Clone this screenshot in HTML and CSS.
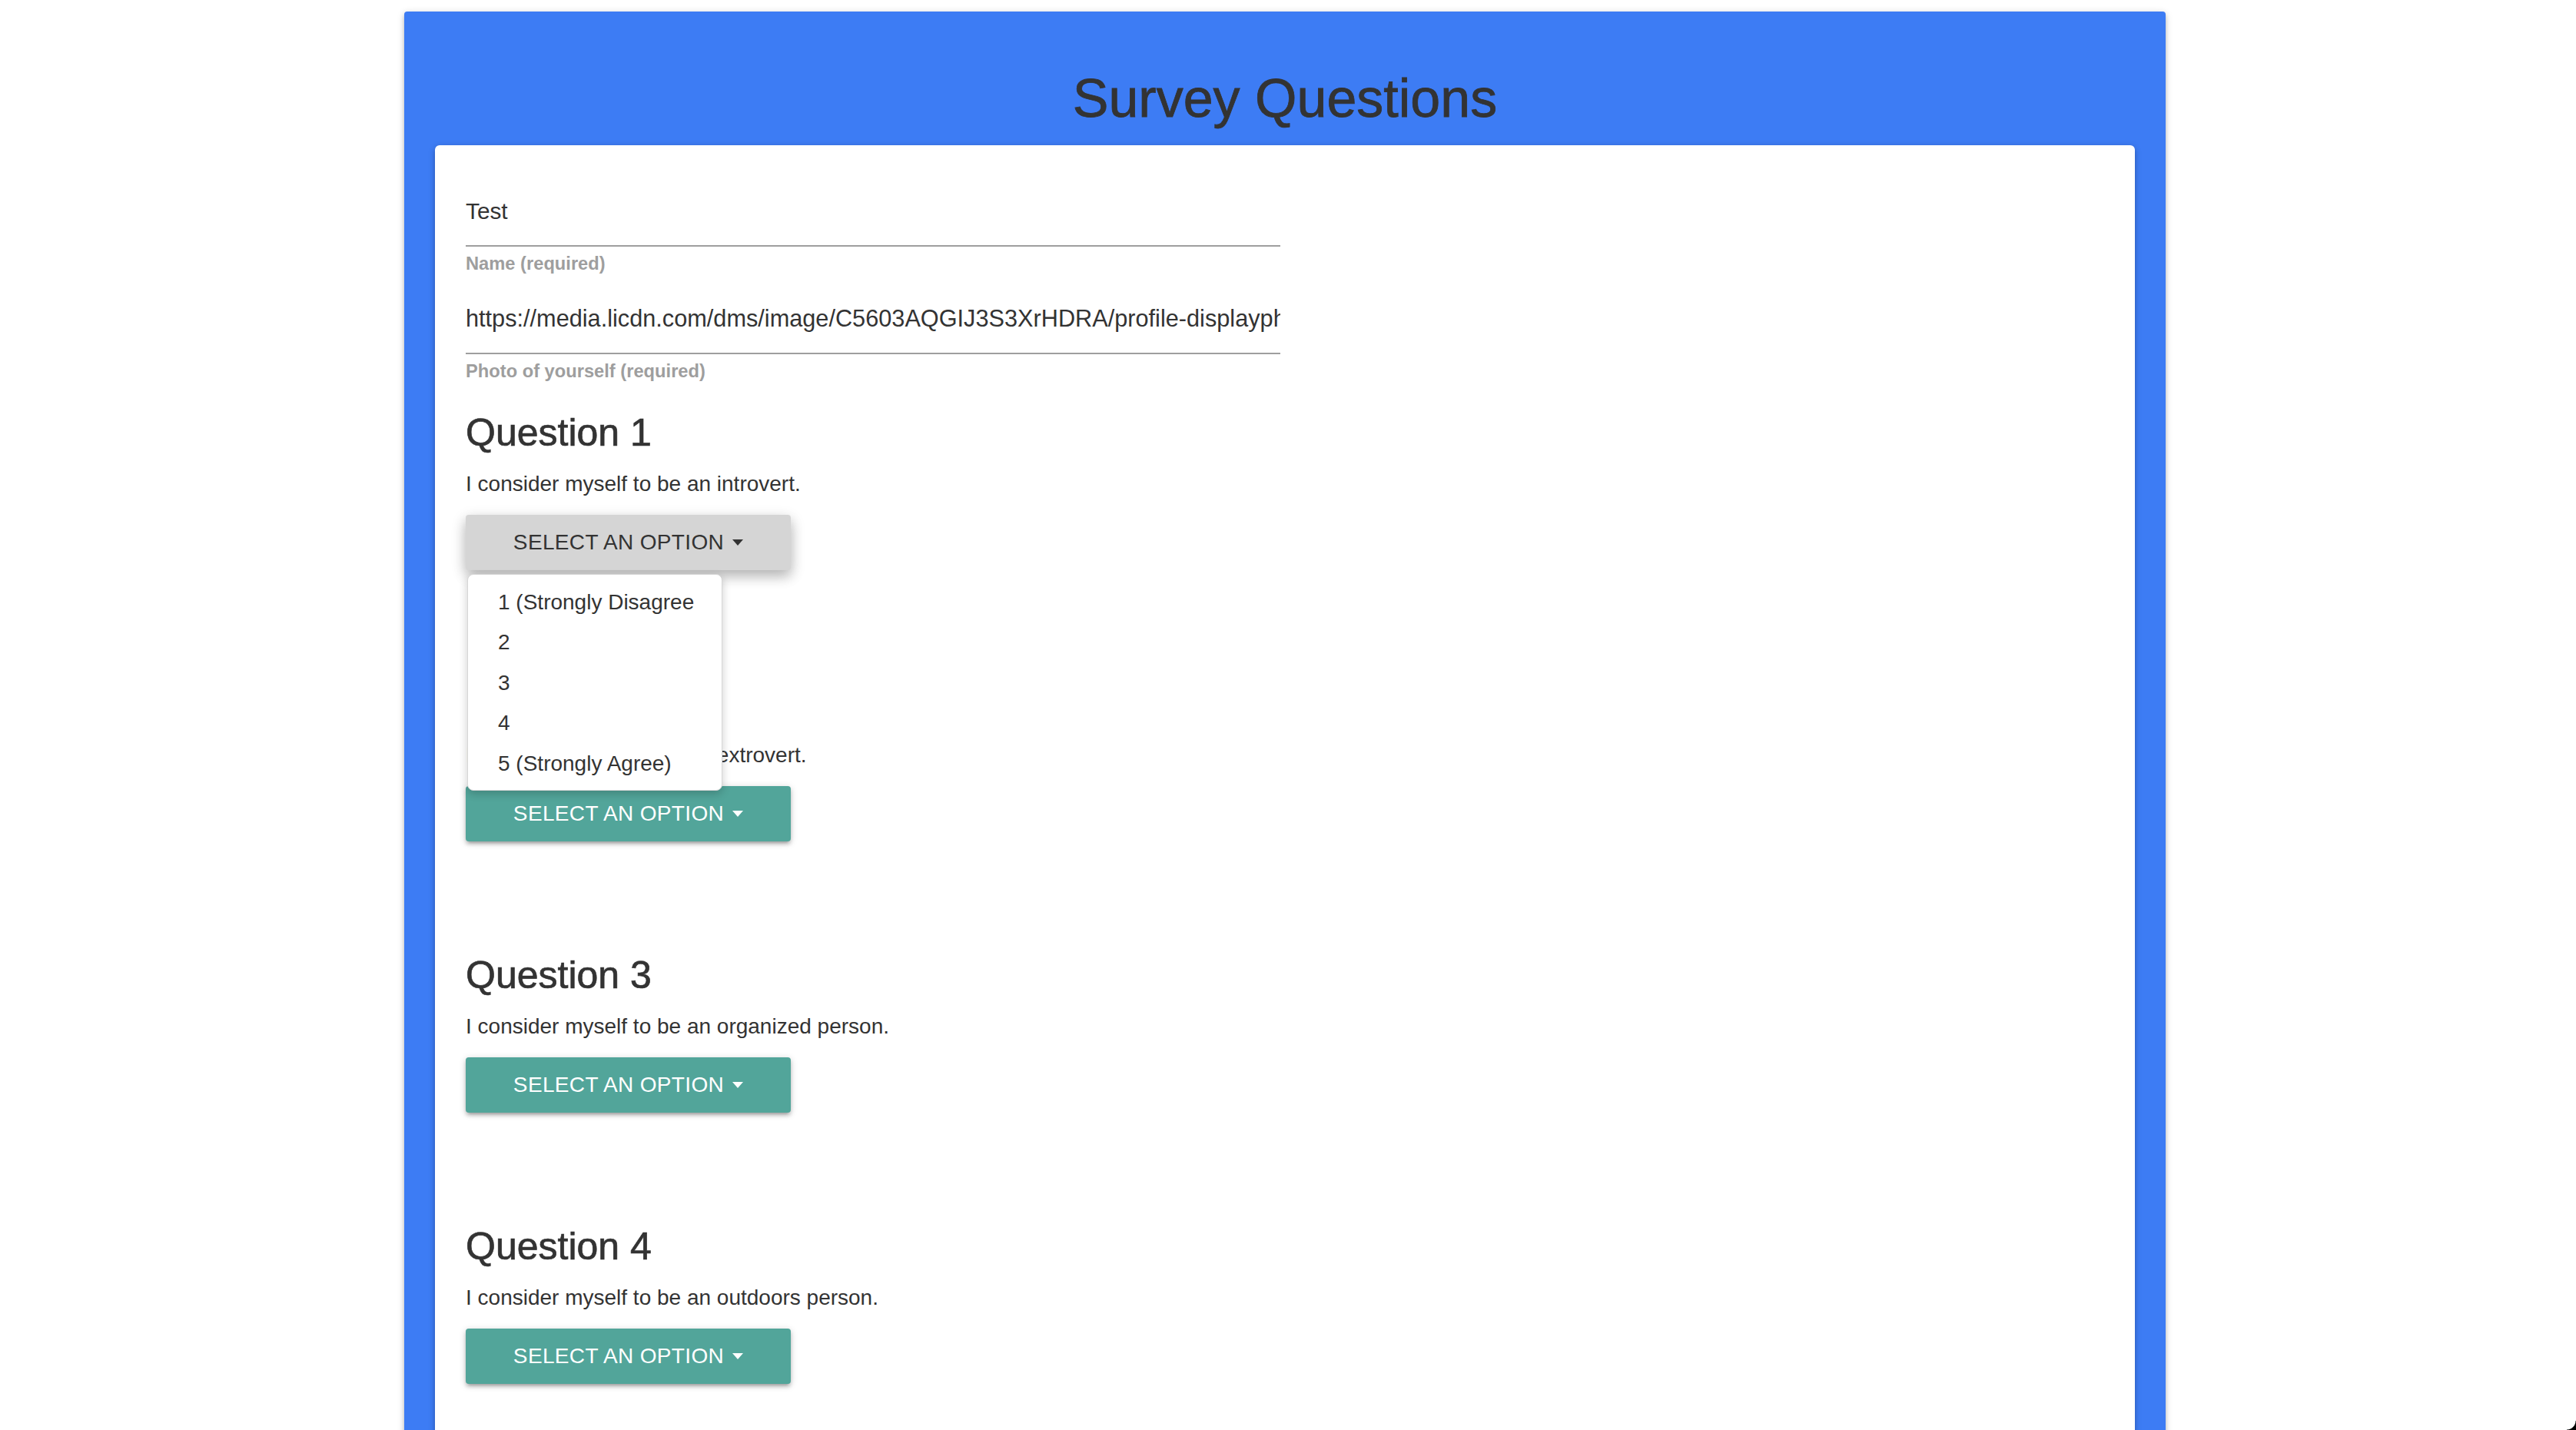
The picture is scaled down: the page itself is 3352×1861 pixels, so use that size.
FILE: index.html
```html
<!DOCTYPE html>
<html lang="en">
<head>
<meta charset="utf-8">
<title>Survey Questions</title>
<link rel="stylesheet" href="styles.css">
</head>
<body>
<div class="page">
  <div class="survey">
    <h1 class="title">Survey Questions</h1>
    <div class="card">
      <div class="field">
        <div class="field-input">Test</div>
        <div class="field-label">Name (required)</div>
      </div>
      <div class="field field-next">
        <div class="field-input field-url">https://media.licdn.com/dms/image/C5603AQGIJ3S3XrHDRA/profile-displayphoto-shrink_200_200/0?e=1530000000</div>
        <div class="field-label">Photo of yourself (required)</div>
      </div>

      <div class="question question-first">
        <h2 class="q-title">Question 1</h2>
        <p class="q-text">I consider myself to be an introvert.</p>
        <div class="select">
          <button class="btn btn-open" type="button">SELECT AN OPTION<span class="caret"></span></button>
          <ul class="menu">
            <li>1 (Strongly Disagree</li>
            <li>2</li>
            <li>3</li>
            <li>4</li>
            <li>5 (Strongly Agree)</li>
          </ul>
        </div>
      </div>

      <div class="question">
        <h2 class="q-title">Question 2</h2>
        <p class="q-text">I consider myself to be an extrovert.</p>
        <div class="select">
          <button class="btn" type="button">SELECT AN OPTION<span class="caret"></span></button>
        </div>
      </div>

      <div class="question">
        <h2 class="q-title">Question 3</h2>
        <p class="q-text">I consider myself to be an organized person.</p>
        <div class="select">
          <button class="btn" type="button">SELECT AN OPTION<span class="caret"></span></button>
        </div>
      </div>

      <div class="question">
        <h2 class="q-title">Question 4</h2>
        <p class="q-text">I consider myself to be an outdoors person.</p>
        <div class="select">
          <button class="btn" type="button">SELECT AN OPTION<span class="caret"></span></button>
        </div>
      </div>
    </div>
  </div>
</div>
<div class="window-corner"></div>
</body>
</html>
```

FILE: styles.css
```css
* {
  box-sizing: border-box;
}

html {
  overflow: hidden;
}

body {
  margin: 0;
  background: #ffffff;
  color: #333333;
  font-family: "Liberation Sans", Arial, Helvetica, sans-serif;
}

.page {
  padding: 15px 0 0 526px;
}

.survey {
  width: 2292px;
  background: #3d7cf4;
  padding: 73px 40px 40px;
  border-radius: 4px 4px 0 0;
  box-shadow: 0 4px 4px 0 rgba(0, 0, 0, 0.14), 0 6px 2px -4px rgba(0, 0, 0, 0.12), 0 2px 10px 0 rgba(0, 0, 0, 0.2);
}

.title {
  margin: 0;
  font-size: 70px;
  line-height: 80px;
  font-weight: 400;
  text-align: center;
  color: #333333;
  -webkit-text-stroke: 0.8px #333333;
}

.card {
  margin-top: 21px;
  background: #ffffff;
  border-radius: 6px;
  padding: 66px 40px 240px;
  box-shadow: 0 4px 4px 0 rgba(0, 0, 0, 0.14), 0 6px 2px -4px rgba(0, 0, 0, 0.12), 0 2px 10px 0 rgba(0, 0, 0, 0.2);
}

.field-input {
  width: 1060px;
  font-size: 29.8px;
  line-height: 40px;
  padding-bottom: 24px;
  border-bottom: 2px solid #9e9e9e;
  white-space: nowrap;
  overflow: hidden;
  color: #333333;
}

.field-url {
  font-size: 30.7px;
}

.field-label {
  margin-top: 6px;
  font-size: 23.7px;
  line-height: 32px;
  font-weight: 700;
  color: #9e9e9e;
}

.field-next {
  margin-top: 36px;
}

.question {
  margin-bottom: 147px;
}

.question-first {
  margin-top: 37px;
}

.q-title {
  margin: 0;
  font-size: 50px;
  line-height: 55px;
  font-weight: 400;
  color: #333333;
  -webkit-text-stroke: 0.7px #333333;
}

.q-text {
  margin: 19px 0 20px;
  font-size: 28px;
  line-height: 40px;
  color: #333333;
}

.select {
  position: relative;
}

.btn {
  display: flex;
  align-items: center;
  justify-content: center;
  width: 423px;
  height: 72px;
  padding: 0;
  border: 0;
  border-radius: 4px;
  background: #52a59a;
  color: #ffffff;
  font-family: "Liberation Sans", Arial, Helvetica, sans-serif;
  font-size: 28px;
  letter-spacing: 0.35px;
  line-height: 72px;
  box-shadow: 0 4px 4px 0 rgba(0, 0, 0, 0.14), 0 6px 2px -4px rgba(0, 0, 0, 0.12), 0 2px 10px 0 rgba(0, 0, 0, 0.2);
}

.btn-open {
  background: #d5d5d5;
  color: #333333;
  box-shadow: 0 8px 16px 0 rgba(0, 0, 0, 0.18), 0 6px 20px 0 rgba(0, 0, 0, 0.16);
}

.caret {
  width: 0;
  height: 0;
  margin-left: 11px;
  border-left: 7px solid transparent;
  border-right: 7px solid transparent;
  border-top: 8px solid currentColor;
}

.menu {
  position: absolute;
  left: 2px;
  top: 77px;
  z-index: 2;
  width: 332px;
  margin: 0;
  padding: 10px 0 8px;
  list-style: none;
  background: #ffffff;
  border: 1px solid #d6d6d6;
  border-radius: 8px;
  box-shadow: 0 4px 12px rgba(0, 0, 0, 0.2);
}

.menu li {
  padding-left: 39px;
  font-size: 28px;
  line-height: 52.4px;
  color: #333333;
  white-space: nowrap;
}

.window-corner {
  position: fixed;
  right: 0;
  bottom: 0;
  width: 12px;
  height: 12px;
  background: radial-gradient(circle at 0 0, transparent 11px, #000000 12px);
}
```
